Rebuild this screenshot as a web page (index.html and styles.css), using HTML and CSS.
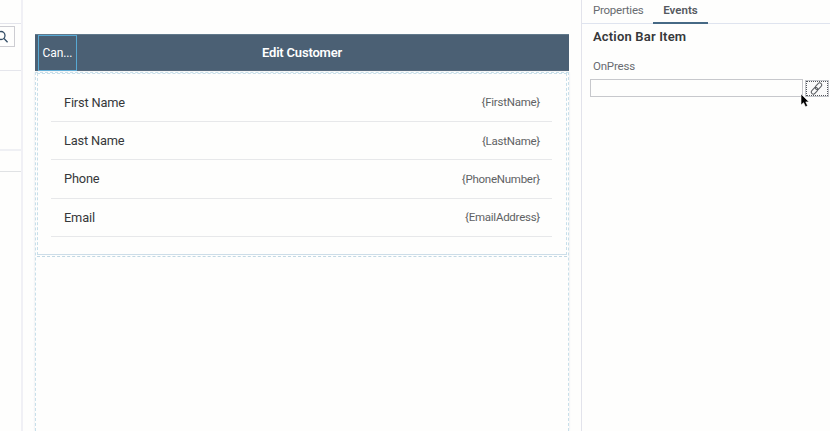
FILE: index.html
```html
<!DOCTYPE html>
<html lang="en">
<head>
<meta charset="utf-8">
<title>Edit Customer</title>
<link rel="stylesheet" href="styles.css">
</head>
<body>
<div class="workspace">
  <aside class="outline">
    <div class="outline-tabs"></div>
    <div class="outline-search"><div class="search-box">
      <svg class="search-icon" viewBox="0 0 14 14"><circle cx="6" cy="5.5" r="4"/><path d="M9 8.5 12.6 12.2"/></svg>
    </div></div>
    <div class="outline-tree"></div>
    <div class="outline-section"></div>
  </aside>
  <main class="canvas">
    <section class="page">
      <header class="action-bar">
        <div class="bar-item">Can...</div>
        <h1 class="bar-title">Edit Customer</h1>
      </header>
      <div class="page-body">
        <div class="form-section">
          <div class="row"><span class="label">First Name</span><span class="value">{FirstName}</span></div>
          <div class="row"><span class="label">Last Name</span><span class="value">{LastName}</span></div>
          <div class="row"><span class="label">Phone</span><span class="value">{PhoneNumber}</span></div>
          <div class="row"><span class="label">Email</span><span class="value">{EmailAddress}</span></div>
        </div>
      </div>
    </section>
  </main>
  <aside class="inspector">
    <nav class="tabs"><span class="tab">Properties</span><span class="tab active">Events</span></nav>
    <h2 class="heading">Action Bar Item</h2>
    <label class="field-label">OnPress</label>
    <div class="field">
      <div class="input"></div>
      <div class="link-button">
        <svg class="link-icon" viewBox="0 0 12 12"><rect x="-3.5" y="-1.9" width="7" height="3.8" rx="1.9" transform="translate(7.8 3.9) rotate(-48)"/><rect x="-3.5" y="-1.9" width="7" height="3.8" rx="1.9" transform="translate(4.2 8.1) rotate(-48)"/></svg>
      </div>
    </div>
  </aside>
</div>
<svg class="cursor" viewBox="0 0 10 16"><path d="M1 1V12L3.6 9.7 5.5 13.8 7.6 12.8 5.8 8.9H9Z"/></svg>
</body>
</html>
```
FILE: styles.css
```css
* { box-sizing: border-box; }
body { margin: 0; background: #fefefd; font-family: Roboto, "Liberation Sans", sans-serif; color: #36383a; overflow: hidden; }
.workspace { display: flex; height: 431px; }

.outline { width: 23px; border-right: 2px solid #f0f0f5; flex: none; }
.outline-tabs { height: 24px; border-bottom: 1px solid #e3e4eb; }
.outline-search { height: 47px; padding-top: 2px; border-bottom: 1px solid #e5e6ec; }
.search-box { width: 15px; height: 21px; border: 1px solid #cdcdd2; border-left: 0; overflow: hidden; }
.search-icon { display: block; width: 14px; height: 14px; margin: 3px 0 0 -5px; fill: none; stroke: #344e66; stroke-width: 1.3; }
.outline-tree { height: 80px; border-bottom: 2px solid #eff0f4; }
.outline-section { height: 21px; border-bottom: 1px solid #e0e2e4; }

.canvas { width: 558px; padding: 34px 12px 0; flex: none; }
.page { height: 397px; display: flex; flex-direction: column; }
.action-bar { height: 37px; background: #4b6074; display: flex; align-items: stretch; padding-left: 3px; border-top: 1px solid #61798b; color: #fff; flex: none; }
.bar-item { width: 39px; border: 1px solid #57a9d4; font-size: 12px; line-height: 35px; text-align: center; letter-spacing: -0.1px; }
.bar-title { flex: 1; margin: 0 42px 0 0; font-size: 13px; font-weight: 600; line-height: 36px; text-align: center; letter-spacing: -0.2px; }
.page-body { flex: 1; border: 1px dashed #c8dfea; border-bottom: 0; padding: 0 1px; box-shadow: 0 0 2px #e0e4e8; margin-top: 1px; }
.form-section { height: 182px; padding: 9.6px 14px 0 13px; border: 1px dashed #c8dfea; border-bottom: 1px solid #ccdde8; position: relative; }
.form-section::after { content: ""; position: absolute; left: -1px; right: -1px; bottom: -3px; border-bottom: 1px dashed #c2d8e4; }
.row { height: 38.33px; display: flex; align-items: center; justify-content: space-between; padding: 0 12px 0 13px; border-bottom: 1px solid #e7e8ea; }
.label { font-size: 12.8px; letter-spacing: -0.17px; }
.value { font-size: 11.5px; letter-spacing: -0.25px; color: #606264; }

.inspector { flex: 1; border-left: 1px solid #e2e3eb; min-width: 0; }
.tabs { height: 24px; display: flex; padding-left: 11px; border-bottom: 1px solid #dfe4ef; }
.tab { font-size: 11.5px; letter-spacing: -0.25px; line-height: 21px; color: #686b70; width: 60px; height: 24px; }
.tab.active { width: 55px; text-align: center; letter-spacing: 0; color: #55595f; font-weight: 600; border-bottom: 2px solid #466985; }
.heading { margin: 4px 0 0 11px; font-size: 13px; letter-spacing: 0.18px; line-height: 18px; font-weight: 600; }
.field-label { display: block; margin: 12px 0 0 11px; font-size: 11.5px; letter-spacing: -0.2px; line-height: 16px; color: #686b70; }
.field { display: flex; align-items: center; gap: 2px; margin: 5px 0 0 8px; }
.input { width: 213px; height: 18px; border: 1px solid #c7c8cc; }
.link-button { width: 24px; height: 17px; border: 1px solid #c3c5ca; outline: 1px dotted #53565b; outline-offset: -2px; background: #fafafa; display: flex; align-items: center; justify-content: center; }
.link-icon { width: 13px; height: 13px; margin-left: -2px; fill: none; stroke: #595c60; stroke-width: 0.9; }
.cursor { position: absolute; left: 800px; top: 93px; width: 10px; height: 16px; fill: #000; stroke: #fff; stroke-width: 0.6; }
```
